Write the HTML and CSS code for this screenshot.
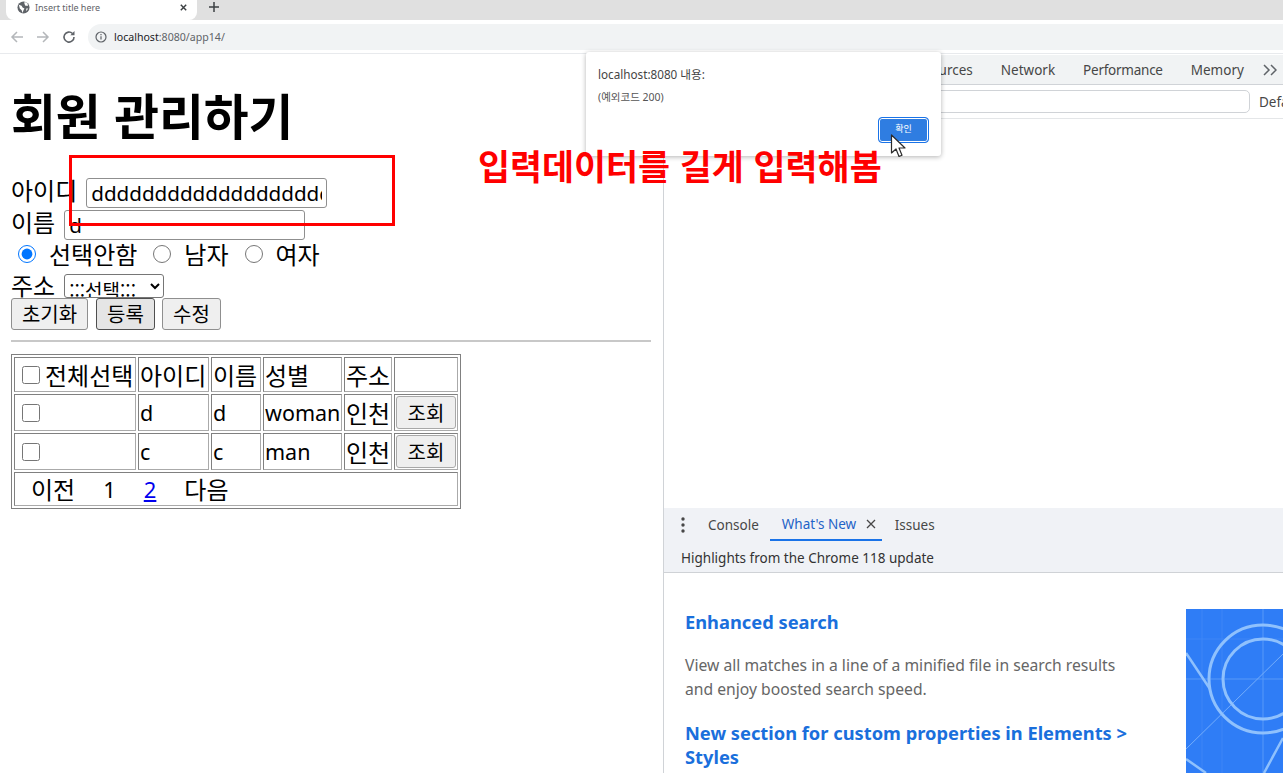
FILE: index.html
```html
<!DOCTYPE html>
<html lang="ko">
<head>
    <meta charset="UTF-8">
    <title>Insert title here</title>
    <link rel="stylesheet" href="styles.css">
</head>
<body>
    <div class="tabstrip">
        <div class="tab">
            <svg class="globe" width="13" height="13" viewBox="0 0 14 14"><circle cx="7" cy="7" r="6.5" fill="#5f6368"/><path d="M2 4l3 1 1 2 2 1-1 2-1 3-1-3-2-2zM8 1l3 1 1 3-3 0-1-2zM10 8l2 0-2 3z" fill="#fff"/></svg>
            <span class="tab-title">Insert title here</span>
            <svg width="9" height="9" viewBox="0 0 10 10"><path d="M2 2l6 6M8 2l-6 6" stroke="#3c4043" stroke-width="1.6"/></svg>
        </div>
        <svg class="newtab" width="12" height="12" viewBox="0 0 12 12"><path d="M6 1v10M1 6h10" stroke="#3c4043" stroke-width="1.5"/></svg>
    </div>
    <div class="toolbar">
        <svg width="14" height="14" viewBox="0 0 14 14"><path d="M13 7H2M7 2L2 7l5 5" fill="none" stroke="#b4b7ba" stroke-width="1.5"/></svg>
        <svg width="14" height="14" viewBox="0 0 14 14"><path d="M1 7h11M7 2l5 5-5 5" fill="none" stroke="#b4b7ba" stroke-width="1.5"/></svg>
        <svg width="14" height="14" viewBox="0 0 14 14"><path d="M12 7a5 5 0 1 1-1.5-3.5" fill="none" stroke="#5f6368" stroke-width="1.6"/><path d="M12.5 1v4.2H8.3z" fill="#5f6368"/></svg>
        <div class="address">
            <svg width="12" height="12" viewBox="0 0 12 12"><circle cx="6" cy="6" r="5" fill="none" stroke="#5f6368" stroke-width="1.2"/><path d="M6 5.2v3.4M6 3v1.2" stroke="#5f6368" stroke-width="1.2"/></svg>
            <span class="url">localhost<span class="url-rest">:8080/app14/</span></span>
        </div>
    </div>

    <div class="main">
        <div class="page">
            <h1>회원 관리하기</h1>
            <div class="row row-id">아이디<input class="field" type="text" value="dddddddddddddddddddddddddd"></div>
            <div class="row row-name">이름<input class="field" type="text" value="d"></div>
            <div class="row row-radio">
                <input type="radio" name="gender" checked><span class="radio-label">선택안함</span>
                <input type="radio" name="gender"><span class="radio-label">남자</span>
                <input type="radio" name="gender"><span class="radio-label">여자</span>
            </div>
            <div class="row row-addr">주소<select class="addr"><option>:::선택:::</option></select></div>
            <div class="row row-btn">
                <button class="btn btn-reset">초기화</button>
                <button class="btn btn-add">등록</button>
                <button class="btn btn-edit">수정</button>
            </div>
            <hr>
            <table>
                <colgroup>
                    <col class="c1"><col class="c2"><col class="c3"><col class="c4"><col class="c5"><col class="c6">
                </colgroup>
                <tr class="head">
                    <td><input type="checkbox" class="check">전체선택</td>
                    <td>아이디</td><td>이름</td><td>성별</td><td>주소</td><td></td>
                </tr>
                <tr class="r1">
                    <td><input type="checkbox" class="check"></td>
                    <td class="latin">d</td><td class="latin">d</td><td class="latin">woman</td><td>인천</td>
                    <td class="act"><button class="btn-view">조회</button></td>
                </tr>
                <tr class="r2">
                    <td><input type="checkbox" class="check"></td>
                    <td class="latin">c</td><td class="latin">c</td><td class="latin">man</td><td>인천</td>
                    <td class="act"><button class="btn-view">조회</button></td>
                </tr>
                <tr class="foot">
                    <td colspan="6">
                        <div class="pager"><span>이전</span><span class="num">1</span><a class="num" href="#">2</a><span>다음</span></div>
                    </td>
                </tr>
            </table>
        </div>

        <div class="devtools">
            <div class="dt-tabs">
                <span class="dt-tab t-src">Sources</span>
                <span class="dt-tab t-net">Network</span>
                <span class="dt-tab t-perf">Performance</span>
                <span class="dt-tab t-mem">Memory</span>
                <svg width="14" height="12" viewBox="0 0 14 12"><path d="M1 1l5 5-5 5M8 1l5 5-5 5" fill="none" stroke="#5f6368" stroke-width="1.5"/></svg>
            </div>
            <div class="dt-filter">
                <div class="dt-input"></div>
                <span class="dt-level">Defa</span>
            </div>
            <div class="dt-empty"></div>
            <div class="drawer-tabs">
                <svg width="4" height="16" viewBox="0 0 4 16"><circle cx="2" cy="2" r="1.7" fill="#474747"/><circle cx="2" cy="8" r="1.7" fill="#474747"/><circle cx="2" cy="14" r="1.7" fill="#474747"/></svg>
                <span class="d-console">Console</span>
                <span class="d-new">What's New
                    <svg width="10" height="10" viewBox="0 0 10 10"><path d="M1 1l8 8M9 1l-8 8" stroke="#474747" stroke-width="1.3"/></svg>
                </span>
                <span class="d-issues">Issues</span>
            </div>
            <div class="drawer-title">Highlights from the Chrome 118 update</div>
            <div class="whatsnew">
                <div class="wn-text">
                    <h3>Enhanced search</h3>
                    <p>View all matches in a line of a minified file in search results and enjoy boosted search speed.</p>
                    <h3>New section for custom properties in Elements &gt; Styles</h3>
                </div>
                <svg class="wn-art" width="97" height="164" viewBox="0 0 97 164">
                    <rect width="97" height="164" fill="#2f7df6"/>
                    <path d="M77 0v164M0 70h97" stroke="#6ba6fa" stroke-width="1" opacity=".7"/>
                    <path d="M16 0v164M36 0v164M0 30h97" stroke="#4d90f8" stroke-width="1" opacity=".5"/>
                    <path d="M0 140L97 45" stroke="#74adfb" stroke-width="1"/>
                    <path d="M0 44l24 36" stroke="#8fc1fd" stroke-width="2.5"/>
                    <path d="M0 150l20 14M78 164l19-35" stroke="#8fc1fd" stroke-width="2.5"/>
                    <circle cx="77" cy="70" r="54" fill="none" stroke="#8fc1fd" stroke-width="3"/>
                    <circle cx="77" cy="70" r="40" fill="none" stroke="#8fc1fd" stroke-width="3"/>
                </svg>
            </div>
        </div>
    </div>

    <div class="redbox"></div>

    <div class="dialog">
        <div class="dlg-title">localhost:8080 내용:</div>
        <div class="dlg-msg">(예외코드 200)</div>
        <div class="dlg-foot"><span class="dlg-ok">확인</span></div>
    </div>
    <svg class="cursor" width="17" height="25" viewBox="0 0 17 25"><path d="M1.5 1v18l4.5-4 3 7.5 3-1.3-3-7.2h6z" fill="#fff" stroke="#2b2b2b" stroke-width="1.2" stroke-linejoin="round"/></svg>
    <div class="redtext">입력데이터를 길게 입력해봄</div>
</body>
</html>
```

FILE: styles.css
```css
html, body {
    margin: 0;
    height: 773px;
    overflow: hidden;
    background: #fff;
}
body {
    font-family: "Noto Sans", "Noto Sans CJK KR", sans-serif;
    color: #000;
    position: relative;
}

/* browser chrome */
.tabstrip {
    height: 20px;
    background: #e0e0e0;
    display: flex;
    padding-left: 6px;
}
.tab {
    width: 191px;
    height: 20px;
    background: #fff;
    border-radius: 0 0 8px 8px;
    display: flex;
    align-items: center;
    padding: 0 9px 6px 11px;
    box-sizing: border-box;
}
.globe {
    margin-right: 5px;
}
.tab-title {
    font-size: 9px;
    color: #5f6368;
    flex: 1;
}
.newtab {
    margin: 1px 0 0 11px;
}
.toolbar {
    height: 34px;
    background: #fff;
    border-bottom: 1px solid #e8eaed;
    box-sizing: border-box;
    display: flex;
    align-items: center;
    padding: 0 0 0 10px;
    gap: 12px;
}
.address {
    flex: 1;
    height: 26px;
    background: #f1f3f4;
    border-radius: 13px 0 0 13px;
    display: flex;
    align-items: center;
    padding-left: 7px;
    gap: 7px;
}
.url {
    font-size: 10.6px;
    color: #202124;
}
.url-rest {
    color: #5f6368;
}

.main {
    display: flex;
    height: 719px;
}

/* left: member page */
.page {
    width: 663px;
    flex: none;
    box-sizing: border-box;
    padding: 33px 12px 0 11px;
    font-family: "Noto Sans CJK KR", sans-serif;
    font-size: 24px;
    line-height: 30px;
}
h1 {
    margin: 0 0 36px;
    font-size: 48.7px;
    line-height: 54px;
    font-weight: 700;
}
.row {
    white-space: nowrap;
    display: flex;
    align-items: flex-start;
    line-height: 26px;
}
.row-id { height: 32px; gap: 9px; }
.row-name { height: 32px; gap: 9px; }
.row-radio {
    height: 31px;
    padding-left: 7px;
}
.row-addr { height: 24px; line-height: 22px; gap: 9px; margin-top: 2px; }
.row-btn { height: 32px; gap: 7px; }
.field, .addr, input[type="radio"] {
    align-self: center;
}
.field {
    width: 241px;
    height: 30px;
    box-sizing: border-box;
    font: 20.6px "Noto Sans", sans-serif;
    padding: 0 4px;
    border: 1px solid #8f8f8f;
    border-radius: 3px;
    color: #000;
}
input[type="radio"] {
    width: 18px;
    height: 18px;
    margin: -6px 13px 0 0;
    accent-color: #0075ff;
    flex: none;
}
.radio-label {
    margin-right: 16px;
}
.addr {
    width: 100px;
    height: 24px;
    font: 19px "Noto Sans CJK KR", sans-serif;
    background: #fff;
    border: 1px solid #767676;
    border-radius: 3px;
    padding: 0;
}
.btn {
    height: 32px;
    padding: 0;
    font: 20px/28px "Noto Sans CJK KR", sans-serif;
    background: #efefef;
    border: 1px solid #8f8f8f;
    border-radius: 3px;
    color: #000;
}
.btn-reset { width: 77px; }
.btn-add { width: 59px; margin-left: 1px; background: #e5e5e5; border-color: #4f4f4f; }
.btn-edit { width: 59px; }
hr {
    margin: 10px 0 12px;
    border: 0;
    border-top: 2px solid #c8c8c8;
}

table {
    table-layout: fixed;
    width: 450px;
    border: 1px solid #808080;
    border-spacing: 2px;
    border-collapse: separate;
    font-size: 24px;
}
td {
    border: 1px solid #808080;
    border-right-color: #aaa;
    border-bottom-color: #aaa;
    padding: 0 1px;
    white-space: nowrap;
    box-sizing: border-box;
    line-height: 28px;
}
.latin { font: 21.5px/28px "Noto Sans", sans-serif; }
.c1 { width: 122px; }
.c2 { width: 71px; }
.c3 { width: 50px; }
.c4 { width: 79px; }
.c5 { width: 48px; }
.c6 { width: 64px; }
.head td { height: 35px; }
.r1 td, .r2 td { height: 37px; }
.foot td { height: 34px; }
.check {
    width: 18px;
    height: 18px;
    margin: 0 0 0 6px;
    vertical-align: 1px;
}
.head .check { margin: 0 5px 0 6px; }
.act { padding: 0 1px; }
.btn-view {
    width: 60px;
    height: 33px;
    padding: 0;
    display: block;
    font: 20px "Noto Sans CJK KR", sans-serif;
    background: #efefef;
    border: 1px solid #a8a8a8;
    border-radius: 3px;
}
.pager {
    display: flex;
    padding-left: 15px;
    gap: 28px;
}
.pager .num { font-size: 22px; font-family: "Noto Sans", sans-serif; }
.pager a { color: #0000ee; }

/* right: devtools */
.devtools {
    flex: 1;
    min-width: 0;
    border-left: 1px solid #d0d3d7;
    display: flex;
    flex-direction: column;
    font-size: 13.5px;
    color: #474747;
    overflow: hidden;
}
.dt-tabs {
    height: 29px;
    margin-top: 1px;
    background: #f1f3f4;
    border-bottom: 1px solid #d0d3d7;
    display: flex;
    align-items: center;
    padding-left: 259px;
    gap: 28px;
    white-space: nowrap;
    flex: none;
}
.t-perf { letter-spacing: -.25px; }
.dt-tabs svg { margin-left: -9px; }
.dt-filter {
    height: 33px;
    border-bottom: 1px solid #e4e6e8;
    display: flex;
    align-items: center;
    flex: none;
    white-space: nowrap;
}
.dt-input {
    margin-left: 120px;
    width: 464px;
    height: 21px;
    border: 1px solid #d0d3d7;
    border-radius: 5px;
    flex: none;
}
.dt-level { margin-left: 9px; }
.dt-empty {
    height: 389px;
    flex: none;
}
.drawer-tabs {
    height: 33px;
    background: #f0f2f6;
    display: flex;
    align-items: center;
    padding-left: 17px;
    flex: none;
}
.d-console { margin-left: 23px; }
.d-new {
    margin-left: 11px;
    height: 33px;
    line-height: 33px;
    padding: 0 6px 0 12px;
    color: #1f63c7;
    border-bottom: 2px solid #1a73e8;
    box-sizing: border-box;
}
.d-new svg { margin-left: 6px; }
.d-issues { margin-left: 13px; }
.drawer-title {
    height: 31px;
    line-height: 34px;
    background: #f0f2f6;
    border-bottom: 1px solid #cfd2d6;
    padding-left: 17px;
    color: #333;
    flex: none;
}
.whatsnew {
    display: flex;
    flex: 1;
    min-height: 0;
    padding: 37px 0 0 21px;
}
.wn-text {
    width: 466px;
    flex: none;
}
.wn-text h3 {
    margin: 0 0 19px;
    font-size: 18.3px;
    line-height: 24px;
    font-weight: 700;
    color: #1a6fdc;
}
.wn-text p {
    margin: 0 0 20px;
    max-width: 445px;
    font-size: 15.7px;
    line-height: 24px;
    color: #666;
}
.wn-art {
    margin: -1px 0 0 35px;
    flex: none;
}

/* things lying over the page */
.redbox {
    position: absolute;
    left: 69px;
    top: 155px;
    width: 326px;
    height: 71px;
    box-sizing: border-box;
    border: 3px solid #f00;
}
.redtext {
    position: absolute;
    left: 478px;
    top: 142px;
    font-family: "Noto Sans CJK KR", sans-serif;
    font-size: 34.8px;
    line-height: 46px;
    font-weight: 700;
    color: #f00;
    white-space: nowrap;
}
.dialog {
    position: absolute;
    left: 586px;
    top: 52px;
    width: 355px;
    height: 104px;
    box-sizing: border-box;
    padding: 14px 12px 0;
    background: #fff;
    border-radius: 3px;
    box-shadow: 0 1px 5px rgba(0, 0, 0, .3);
    color: #444;
}
.dlg-title {
    font-size: 11.7px;
    line-height: 16px;
}
.dlg-msg {
    margin-top: 8px;
    font-size: 10.5px;
    line-height: 14px;
    color: #555;
}
.dlg-foot {
    display: flex;
    justify-content: flex-end;
    margin-top: 13px;
}
.dlg-ok {
    width: 51px;
    height: 26px;
    box-sizing: border-box;
    text-align: center;
    font-size: 9px;
    line-height: 22px;
    color: #fff;
    background: #2f7de1;
    border: 1px solid #1a73e8;
    box-shadow: inset 0 0 0 1px #fff;
    border-radius: 4px;
}
.cursor {
    position: absolute;
    left: 890px;
    top: 134px;
}
```
